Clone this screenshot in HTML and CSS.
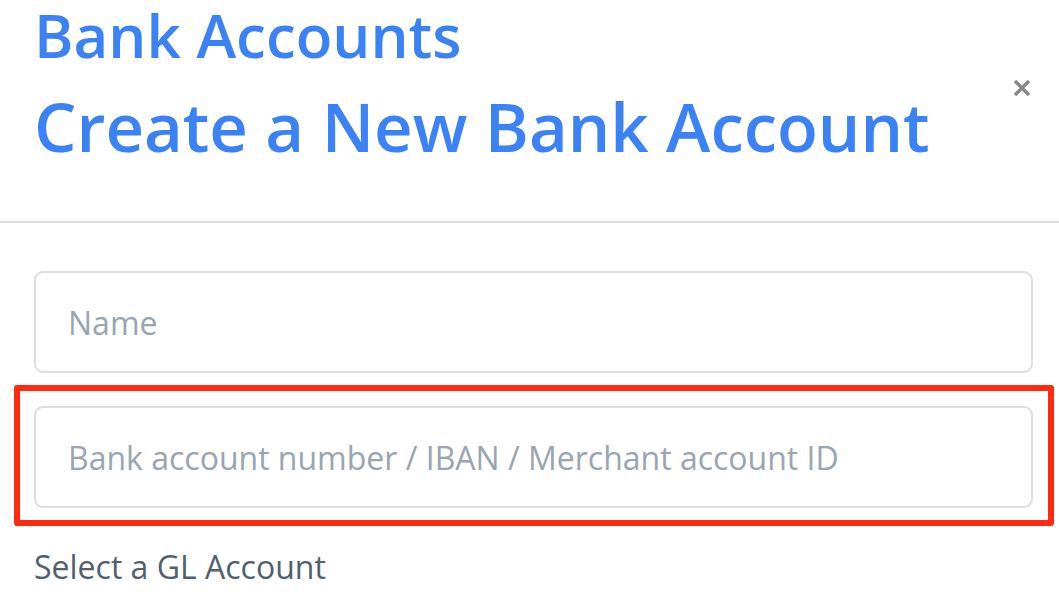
FILE: index.html
```html
<!DOCTYPE html>
<html lang="en">
<head>
<meta charset="utf-8">
<title>Create a New Bank Account</title>
<link rel="stylesheet" href="styles.css">
</head>
<body>
<div class="modal">
  <header class="modal-header">
    <div class="titles">
      <div class="eyebrow">Bank Accounts</div>
      <h1 class="title">Create a New Bank Account</h1>
    </div>
    <button class="close" type="button" aria-label="Close">
      <svg width="18" height="18" viewBox="0 0 18 18"><path d="M2 2L16 16M16 2L2 16" stroke="#888888" stroke-width="3.4" fill="none"/></svg>
    </button>
  </header>
  <div class="modal-body">
    <input class="field" type="text" placeholder="Name">
    <div class="highlight">
      <input class="field" type="text" placeholder="Bank account number / IBAN / Merchant account ID">
    </div>
    <label class="label">Select a GL Account</label>
  </div>
</div>
</body>
</html>
```

FILE: styles.css
```css
* { box-sizing: border-box; }
html, body { margin: 0; padding: 0; background: #fff; }
body { font-family: "Open Sans", "Noto Sans", sans-serif; overflow: hidden; }

.modal { width: 1059px; }

.modal-header {
  display: flex;
  align-items: flex-start;
  justify-content: space-between;
  height: 223px;
  padding: 0 28px 0 34px;
  border-bottom: 2px solid #dedede;
}

.eyebrow {
  font-size: 60px;
  font-weight: 600;
  line-height: 66px;
  color: #3b82f6;
  margin-top: 2px;
}

.title {
  margin: 13px 0 0;
  font-size: 67px;
  font-weight: 600;
  line-height: 90px;
  color: #3b82f6;
}

.close {
  margin-top: 79px;
  padding: 0;
  border: 0;
  background: none;
  width: 18px;
  height: 18px;
  display: block;
}
.close svg { display: block; }

.modal-body {
  padding: 48px 26px 0 34px;
  display: flex;
  flex-direction: column;
}

.field {
  display: block;
  width: 100%;
  height: 102px;
  border: 2px solid #dedede;
  border-radius: 9px;
  padding: 0 32px;
  font-family: "Open Sans", "Noto Sans", sans-serif;
  font-size: 32px;
  color: #52606d;
  background: #fff;
  outline: none;
}
.field::placeholder { color: #9aa5b1; }

.highlight {
  margin: 12px -21px 0 -20px;
  padding: 15px 15px 12px 14px;
  border: 6px solid #ff2a0f;
  border-radius: 3px;
}

.label {
  margin-top: 17px;
  font-size: 32px;
  line-height: 48px;
  color: #52606d;
}
```
